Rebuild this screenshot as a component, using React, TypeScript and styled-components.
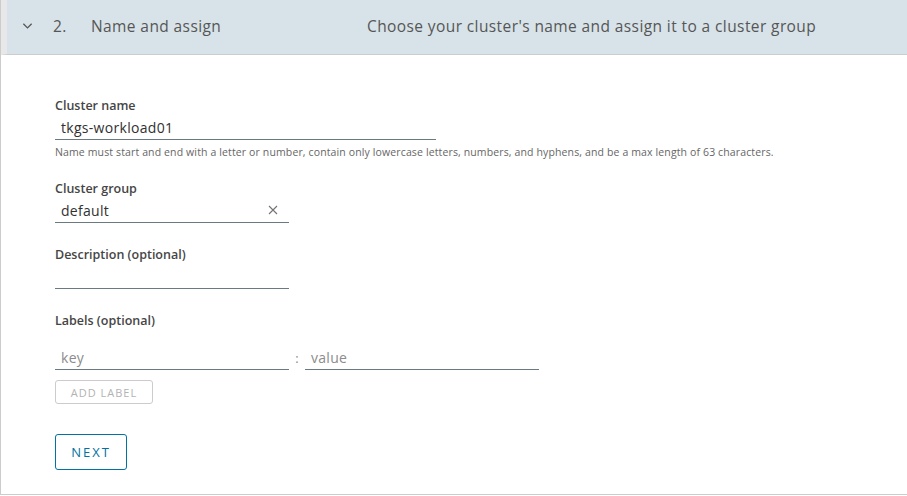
import React from "react";
import styled, { createGlobalStyle } from "styled-components";

const GlobalStyle = createGlobalStyle`
	html, body {
		margin: 0;
		padding: 0;
		background: #fff;
	}
	body {
		font-family: "Open Sans", "Lato", sans-serif;
		color: #565656;
	}
`;

export default function App() {
	return (
		<>
			<GlobalStyle />
			<Panel>
				<Header>
					<Chevron viewBox="0 0 12 8">
						<path d="M1.5 1.5 L6 6 L10.5 1.5" />
					</Chevron>
					<StepNumber>2.</StepNumber>
					<StepTitle>Name and assign</StepTitle>
					<StepDescription>
						Choose your cluster's name and assign it to a cluster group
					</StepDescription>
				</Header>
				<Body>
					<Field>
						<Label>Cluster name</Label>
						<Input width={381}>tkgs-workload01</Input>
						<Helper>
							Name must start and end with a letter or number, contain only lowercase
							letters, numbers, and hyphens, and be a max length of 63 characters.
						</Helper>
					</Field>
					<Field gap={21}>
						<Label>Cluster group</Label>
						<Input width={234}>
							default
							<ClearIcon viewBox="0 0 10 10">
								<path d="M1 1 L9 9 M9 1 L1 9" />
							</ClearIcon>
						</Input>
					</Field>
					<Field gap={23}>
						<Label>Description (optional)</Label>
						<Input width={234} />
					</Field>
					<Field gap={23}>
						<Label>Labels (optional)</Label>
						<LabelRow>
							<Input width={234} placeholder>
								key
							</Input>
							<Colon>:</Colon>
							<Input width={234} placeholder>
								value
							</Input>
						</LabelRow>
						<AddLabelButton disabled>ADD LABEL</AddLabelButton>
					</Field>
					<NextButton>NEXT</NextButton>
				</Body>
			</Panel>
		</>
	);
}

const Panel = styled.div`
	width: 920px;
	height: 494px;
	border-left: 1px solid #ccc;
	border-bottom: 1px solid #ccc;
	display: flex;
	flex-direction: column;
`;

const Header = styled.div`
	height: 55px;
	flex-shrink: 0;
	display: flex;
	align-items: center;
	padding-bottom: 2px;
	box-sizing: border-box;
	background: #d8e3e9;
	border-left: 6px solid #e8e8e8;
	border-bottom: 1px solid #ccc;
	font-size: 15.5px;
	letter-spacing: 0.4px;
	color: #565656;
`;

const Chevron = styled.svg`
	width: 11px;
	height: 8px;
	margin-left: 15px;
	fill: none;
	stroke: #565656;
	stroke-width: 1.4;
`;

const StepNumber = styled.span`
	margin-left: 20px;
	width: 38px;
`;

const StepTitle = styled.span`
	width: 276px;
`;

const StepDescription = styled.span``;

const Body = styled.div`
	flex: 1;
	padding: 42px 0 0 54px;
	display: flex;
	flex-direction: column;
	align-items: flex-start;
`;

const Field = styled.div<{ gap?: number }>`
	display: flex;
	flex-direction: column;
	align-items: flex-start;
	margin-top: ${(p) => p.gap ?? 0}px;
`;

const Label = styled.div`
	font-size: 12.5px;
	line-height: 18px;
	font-weight: 600;
	color: #454545;
`;

const Input = styled.div<{ width: number; placeholder?: boolean }>`
	box-sizing: border-box;
	width: ${(p) => p.width}px;
	height: 25px;
	padding: 0 6px;
	display: flex;
	align-items: center;
	justify-content: space-between;
	font-size: 14px;
	letter-spacing: 0.3px;
	color: ${(p) => (p.placeholder ? "#8c8c8c" : "#313131")};
	border-bottom: 1px solid #6a7a81;
`;

const ClearIcon = styled.svg`
	width: 10px;
	height: 10px;
	margin-right: 5px;
	fill: none;
	stroke: #737373;
	stroke-width: 1.1;
`;

const Helper = styled.div`
	margin-top: 5px;
	font-size: 10.5px;
	line-height: 14px;
	letter-spacing: 0.13px;
	color: #666;
`;

const LabelRow = styled.div`
	display: flex;
	align-items: center;
	margin-top: 15px;
`;

const Colon = styled.span`
	width: 16px;
	text-align: center;
	font-size: 13px;
	color: #8c8c8c;
`;

const AddLabelButton = styled.button`
	margin-top: 10px;
	box-sizing: border-box;
	width: 98px;
	height: 24px;
	padding: 0;
	background: #fff;
	border: 1px solid #ccc;
	border-radius: 3px;
	font-family: inherit;
	font-size: 11px;
	letter-spacing: 1px;
	color: #b3b3b3;
`;

const NextButton = styled.button`
	margin-top: 30px;
	box-sizing: border-box;
	width: 72px;
	height: 36px;
	padding: 0;
	background: #fff;
	border: 1px solid #0072a3;
	border-radius: 3px;
	font-family: inherit;
	font-size: 13px;
	letter-spacing: 2px;
	color: #0072a3;
`;
